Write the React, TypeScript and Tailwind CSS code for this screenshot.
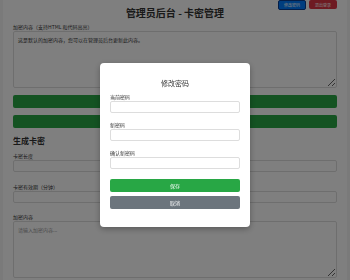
import React from "react";

const font = { fontFamily: '"Noto Sans CJK SC", "Noto Sans", sans-serif' };

function Field({ label, className = "" }: { label: string; className?: string }) {
  return (
    <div className={className}>
      <label className="block text-[5px] leading-[7px] text-[#333]">{label}</label>
      <input className="mt-[1px] block h-[12px] w-full rounded-[2px] border border-[#ddd] bg-white px-[3px] text-[5px]" />
    </div>
  );
}

export default function App() {
  return (
    <div className="relative min-h-[280px] bg-[#f4f4f4] px-[3px] pb-[10px]" style={font}>
      <div className="bg-white px-[10px] pt-[6px] pb-[10px]">
        <h1 className="text-center text-[10px] font-bold leading-[14px] text-[#333]">管理员后台 - 卡密管理</h1>

        <label className="mt-[3px] block text-[5px] leading-[7px] text-[#333]">加密内容（支持HTML 和代码高亮）</label>
        <textarea
          className="mt-[1px] block h-[57px] w-full rounded-[2px] border border-[#ddd] px-[4px] py-[4px] text-[5px] leading-[7px] text-[#333]"
          defaultValue="这是默认的加密内容，您可以在管理员后台更新此内容。"
        />
        <button className="mt-[7px] block h-[13px] w-full rounded-[2px] bg-[#28a745]" />
        <button className="mt-[7px] block h-[13px] w-full rounded-[2px] bg-[#28a745]" />

        <h2 className="mt-[8px] text-[8px] font-bold leading-[10px] text-[#333]">生成卡密</h2>
        <Field label="卡密长度" className="mt-[6px]" />
        <Field label="卡密有效期（分钟）" className="mt-[11px]" />
        <label className="mt-[10px] block text-[5px] leading-[7px] text-[#333]">加密内容</label>
        <textarea
          className="mt-[1px] block h-[57px] w-full rounded-[2px] border border-[#ddd] px-[4px] py-[4px] text-[5px] leading-[7px] placeholder:text-[#999]"
          placeholder="请输入加密内容..."
        />
      </div>

      <div className="absolute right-[13px] top-0 flex gap-[3px]">
        <button className="h-[10px] w-[28px] rounded-[2px] border border-[#0a3d91] bg-[#007bff] text-[4px] text-white">修改密码</button>
        <button className="h-[9px] w-[28px] rounded-[2px] bg-[#dc3545] text-[4px] text-white">退出登录</button>
      </div>

      <div className="fixed inset-0 flex justify-center bg-black/50 pt-[63px]">
        <div className="h-[164px] w-[150px] rounded-[4px] bg-white px-[10px] pt-[16px] shadow-[0_2px_6px_rgba(0,0,0,0.3)]">
          <h3 className="text-center text-[7px] leading-[9px] text-[#333]">修改密码</h3>
          <Field label="当前密码" className="mt-[5px]" />
          <Field label="新密码" className="mt-[8px]" />
          <Field label="确认新密码" className="mt-[8px]" />
          <button className="mt-[10px] block h-[13px] w-full rounded-[2px] bg-[#28a745] text-[5px] text-white">保存</button>
          <button className="mt-[4px] block h-[13px] w-full rounded-[2px] bg-[#6c757d] text-[5px] text-white">取消</button>
        </div>
      </div>
    </div>
  );
}
